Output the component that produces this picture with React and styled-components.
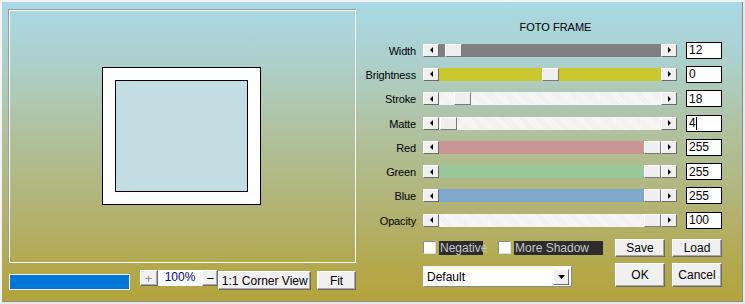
import React from "react";
import styled, { createGlobalStyle } from "styled-components";

const Global = createGlobalStyle`
  html, body { margin: 0; padding: 0; }
  body {
    width: 745px;
    height: 304px;
    overflow: hidden;
    font-family: "Liberation Sans", Arial, sans-serif;
    font-size: 11px;
    color: #000;
  }
`;

const Window = styled.div`
  box-sizing: border-box;
  width: 745px;
  height: 304px;
  display: flex;
  background: linear-gradient(
    #a8d9e5 0%,
    #acd0cc 20%,
    #b0c2a0 42%,
    #b2b57a 65%,
    #b3a84d 88%,
    #b3a43a 100%
  );
  border-top: 2px solid #f4f4f4;
  border-left: 2px solid #f4f4f4;
  border-right: 2px solid #e8e8e8;
  border-bottom: 2px solid #e8e8e8;
  box-shadow: inset -1px -1px 0 #8a8a8a;
`;

const LeftPanel = styled.div`
  box-sizing: border-box;
  width: 354px;
  flex-shrink: 0;
  padding: 7px 0 0 6px;
  display: flex;
  flex-direction: column;
`;

const Preview = styled.div`
  box-sizing: border-box;
  width: 348px;
  height: 254px;
  border-top: 1px solid #9a9a9a;
  border-left: 1px solid #9a9a9a;
  display: flex;
`;

const PreviewInner = styled.div`
  box-sizing: border-box;
  width: 100%;
  height: 100%;
  border: 1px solid #fff;
  padding: 56px 0 0 92px;
`;

const Frame = styled.div`
  box-sizing: border-box;
  width: 159px;
  height: 138px;
  background: #fff;
  border: 1px solid #000;
  padding: 12px;
`;

const FramePhoto = styled.div`
  box-sizing: border-box;
  width: 100%;
  height: 100%;
  background: #c4dde3;
  border: 1px solid #000;
`;

const BottomBar = styled.div`
  display: flex;
  align-items: flex-start;
  margin-top: 7px;
`;

const Progress = styled.div`
  box-sizing: border-box;
  width: 121px;
  height: 16px;
  margin-top: 4px;
  margin-left: 1px;
  background: #0078d7;
  border: 1px solid #f2f2f2;
  margin-right: 10px;
`;

const Btn = styled.button`
  box-sizing: border-box;
  height: ${p => p.$h || 18}px;
  width: ${p => p.$w}px;
  margin-top: ${p => p.$top || 0}px;
  margin-left: ${p => p.$ml || 0}px;
  padding: 0;
  font-family: "Liberation Sans", Arial, sans-serif;
  font-size: ${p => p.$fs || 12}px;
  color: ${p => (p.$disabled ? "#8c8c8c" : "#000")};
  background: #f0f0f0;
  border: 1px solid;
  border-color: #fff #6a6a6a #6a6a6a #fff;
  box-shadow: inset -1px -1px 0 #a8a8a8;
  display: flex;
  align-items: center;
  justify-content: center;
  line-height: 1;
`;

const ZoomField = styled.div`
  box-sizing: border-box;
  width: 45px;
  height: 16px;
  background: #fff;
  color: #000080;
  font-size: 12px;
  display: flex;
  align-items: center;
  justify-content: center;
  padding-bottom: 2px;
`;

const RightPanel = styled.div`
  flex: 1;
  display: flex;
  flex-direction: column;
  padding-top: 18px;
`;

const Title = styled.div`
  height: 18px;
  padding-left: 12px;
  text-align: center;
  font-size: 11px;
  padding-top: 1px;
  box-sizing: border-box;
`;

const Rows = styled.div`
  display: flex;
  flex-direction: column;
`;

const Row = styled.div`
  display: flex;
  align-items: center;
  height: 24.3px;
`;

const Label = styled.div`
  width: 60px;
  text-align: right;
  margin-right: 7px;
  font-size: 11px;
  letter-spacing: -0.15px;
  padding-top: 1px;
`;

const Slider = styled.div`
  display: flex;
  width: 254px;
  height: 13px;
`;

const ArrowBtn = styled.div`
  box-sizing: border-box;
  width: 16px;
  height: 13px;
  background: #f0f0f0;
  border: 1px solid;
  border-color: #fff #6a6a6a #6a6a6a #fff;
  display: flex;
  align-items: center;
  justify-content: center;
  flex-shrink: 0;
`;

const Track = styled.div`
  flex: 1;
  height: 13px;
  display: flex;
  background: ${p => p.$color};
  background-image: ${p =>
    p.$hatch
      ? "repeating-linear-gradient(45deg, #f8f8f8 0 1px, #efefef 1px 2px)"
      : "none"};
`;

const Thumb = styled.div`
  box-sizing: border-box;
  width: 17px;
  height: 13px;
  background: #efefef;
  border: 1px solid;
  border-color: #fff #7a7a7a #7a7a7a #fff;
  flex-shrink: 0;
`;

const NumBox = styled.div`
  box-sizing: border-box;
  width: 36px;
  height: 17px;
  margin-left: 9px;
  background: #fff;
  border: 1px solid #000;
  font-size: 12px;
  padding: 0 0 0 2px;
  display: flex;
  align-items: center;
  line-height: 1;
`;

const Caret = styled.span`
  display: inline-block;
  width: 1px;
  height: 13px;
  background: #000;
`;

const Controls = styled.div`
  display: grid;
  grid-template-columns: 192px 57px 50px;
  grid-template-rows: 17px 24px;
  row-gap: 7px;
  margin-top: 7px;
  padding-left: 67px;
`;

const Checks = styled.div`
  display: flex;
  align-items: center;
  gap: 15px;
`;

const Check = styled.label`
  display: flex;
  align-items: center;
`;

const Box = styled.span`
  box-sizing: border-box;
  width: 13px;
  height: 13px;
  background: #fff;
  border: 1px solid;
  border-color: #8a8a8a #e0e0e0 #e0e0e0 #8a8a8a;
  margin-right: 3px;
`;

const CheckText = styled.span`
  background: #2c2c2c;
  color: #c8c8c8;
  font-size: 12px;
  height: 14px;
  line-height: 14px;
  width: ${p => p.$w}px;
  padding-left: 1px;
  box-sizing: border-box;
  white-space: nowrap;
`;

const Select = styled.div`
  box-sizing: border-box;
  width: 149px;
  height: 21px;
  background: #fff;
  border: 1px solid;
  border-color: #f4f4f4 #8a8a8a #8a8a8a #f4f4f4;
  display: flex;
  align-items: center;
  justify-content: space-between;
  padding: 0 2px 0 3px;
  font-size: 12px;
  margin-top: 3px;
`;

const SelectArrow = styled.div`
  box-sizing: border-box;
  width: 16px;
  height: 16px;
  background: #f0f0f0;
  border: 1px solid;
  border-color: #fff #6a6a6a #6a6a6a #fff;
  display: flex;
  align-items: center;
  justify-content: center;
`;

const Tri = ({ dir }) => {
  const pts = {
    left: "4,0 4,6 1,3",
    right: "1,0 1,6 4,3",
    down: "0,1 7,1 3.5,5",
  }[dir];
  return (
    <svg width={dir === "down" ? 7 : 5} height="6" viewBox={dir === "down" ? "0 0 7 6" : "0 0 5 6"}>
      <polygon points={pts} fill="#000" />
    </svg>
  );
};

const sliders = [
  { label: "Width", value: "12", color: "#808080", pos: 6 },
  { label: "Brightness", value: "0", color: "#c9c82e", pos: 103 },
  { label: "Stroke", value: "18", color: "#f4f4f4", pos: 15, hatch: true },
  { label: "Matte", value: "4", color: "#f4f4f4", pos: 1, hatch: true, caret: true },
  { label: "Red", value: "255", color: "#c99595", pos: 205 },
  { label: "Green", value: "255", color: "#98c898", pos: 205 },
  { label: "Blue", value: "255", color: "#7fa8cc", pos: 205 },
  { label: "Opacity", value: "100", color: "#f4f4f4", pos: 205, hatch: true },
];

const SliderRow = ({ label, value, color, pos, hatch, caret }) => (
  <Row>
    <Label>{label}</Label>
    <Slider>
      <ArrowBtn>
        <Tri dir="left" />
      </ArrowBtn>
      <Track $color={color} $hatch={hatch}>
        <div style={{ width: pos }} />
        <Thumb />
      </Track>
      <ArrowBtn>
        <Tri dir="right" />
      </ArrowBtn>
    </Slider>
    <NumBox>
      {value}
      {caret && <Caret />}
    </NumBox>
  </Row>
);

export default function App() {
  return (
    <>
      <Global />
      <Window>
        <LeftPanel>
          <Preview>
            <PreviewInner>
              <Frame>
                <FramePhoto />
              </Frame>
            </PreviewInner>
          </Preview>
          <BottomBar>
            <Progress />
            <Btn $w={18} $h={16} $disabled $fs={13}>+</Btn>
            <ZoomField>100%</ZoomField>
            <Btn $w={16} $h={16} $fs={13}>−</Btn>
            <Btn $w={93} $h={19} $top={1}>1:1 Corner View</Btn>
            <Btn $w={39} $h={19} $top={1} $ml={6}>Fit</Btn>
          </BottomBar>
        </LeftPanel>
        <RightPanel>
          <Title>FOTO FRAME</Title>
          <Rows>
            {sliders.map(s => (
              <SliderRow key={s.label} {...s} />
            ))}
          </Rows>
          <Controls>
            <Checks>
              <Check>
                <Box />
                <CheckText $w={44}>Negative</CheckText>
              </Check>
              <Check>
                <Box />
                <CheckText $w={89}>More Shadow</CheckText>
              </Check>
            </Checks>
            <Btn $w={50} $h={18}>Save</Btn>
            <Btn $w={50} $h={18}>Load</Btn>
            <Select>
              Default
              <SelectArrow>
                <Tri dir="down" />
              </SelectArrow>
            </Select>
            <Btn $w={50} $h={24}>OK</Btn>
            <Btn $w={50} $h={24}>Cancel</Btn>
          </Controls>
        </RightPanel>
      </Window>
    </>
  );
}
